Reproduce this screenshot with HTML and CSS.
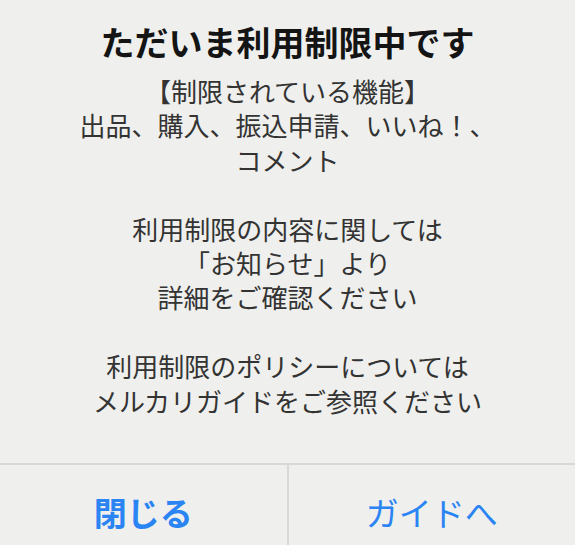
FILE: index.html
```html
<!DOCTYPE html>
<html lang="ja">
<head>
<meta charset="utf-8">
<title>ただいま利用制限中です</title>
<link rel="stylesheet" href="styles.css">
</head>
<body>
<div class="alert">
  <div class="content">
    <h1 class="title">ただいま利用制限中です</h1>
    <p class="message">【制限されている機能】<br>出品、購入、振込申請、いいね！、<br>コメント<br><br>利用制限の内容に関しては<br>「お知らせ」より<br>詳細をご確認ください<br><br>利用制限のポリシーについては<br>メルカリガイドをご参照ください</p>
  </div>
  <div class="actions">
    <button class="btn btn-primary">閉じる</button>
    <button class="btn">ガイドへ</button>
  </div>
</div>
</body>
</html>
```
FILE: styles.css
```css
html, body {
  margin: 0;
  padding: 0;
  height: 545px;
  overflow: hidden;
  background: #efefed;
}
.alert {
  width: 575px;
  height: 545px;
  display: flex;
  flex-direction: column;
  font-family: "Noto Sans CJK JP", "Noto Sans", sans-serif;
  background: #efefed;
}
.content {
  flex: none;
  height: 463px;
  box-sizing: border-box;
  padding-top: 22px;
  text-align: center;
}
.title {
  margin: 0;
  font-size: 34px;
  line-height: 40px;
  font-weight: 700;
  color: #141414;
}
.message {
  margin: 12px 0 0;
  font-size: 26px;
  line-height: 34.4px;
  color: #333333;
}
.actions {
  display: flex;
  border-top: 2px solid #d8d8d6;
  flex: none;
  height: 95px;
}
.btn {
  flex: 1;
  margin: 0;
  padding: 0;
  border: none;
  background: transparent;
  font-family: "Noto Sans CJK JP", "Noto Sans", sans-serif;
  font-size: 33px;
  line-height: 95px;
  color: #2a84f3;
  font-weight: 400;
}
.btn + .btn {
  border-left: 2px solid #d8d8d6;
}
.btn-primary {
  font-weight: 700;
}
```
